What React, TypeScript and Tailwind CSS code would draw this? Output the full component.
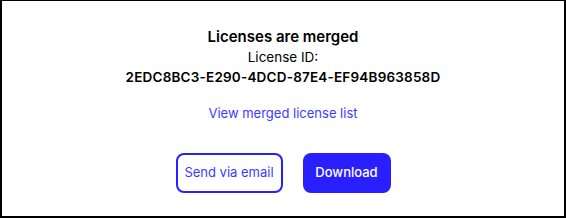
export default function App() {
  return (
    <div className="flex h-[218px] w-[566px] flex-col items-center border-2 border-t border-black bg-white font-['Inter',sans-serif] text-black">
      {/* Heading */}
      <h2 className="mt-[25px] text-[15px] leading-[21px] font-semibold">Licenses are merged</h2>
      <p className="text-[13.5px] leading-[20px]">License ID:</p>
      <p className="text-[13.5px] leading-[20px] font-semibold tracking-[0.2px]">
        2EDC8BC3-E290-4DCD-87E4-EF94B963858D
      </p>

      <a href="#" className="mt-[16px] text-[13px] leading-[20px] text-[#3b3bff]">
        View merged license list
      </a>

      {/* Actions */}
      <div className="mt-[30px] flex gap-[20px]">
        <button className="h-[40px] w-[107px] rounded-[8px] border-2 border-[#2a1fff] text-[13px] text-[#3b3bff]">
          Send via email
        </button>
        <button className="h-[40px] w-[88px] rounded-[8px] bg-[#2a1fff] text-[13px] font-medium text-white">
          Download
        </button>
      </div>
    </div>
  );
}
